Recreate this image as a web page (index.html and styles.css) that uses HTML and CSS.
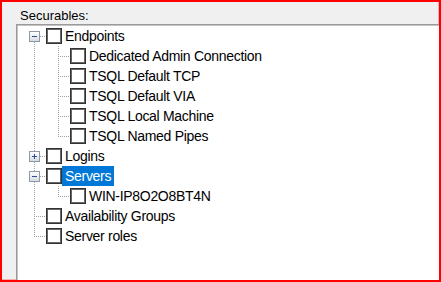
FILE: index.html
```html
<!DOCTYPE html>
<html lang="en">
<head>
    <meta charset="UTF-8">
    <title>Securables</title>
    <link rel="stylesheet" href="styles.css">
</head>
<body>
    <div class="frame">
        <div class="caption">Securables:</div>
        <div class="tree">
            <div class="row">
                <span class="cell first"><span class="expander minus"></span></span>
                <span class="check"></span>
                <span class="label">Endpoints</span>
            </div>
            <div class="row">
                <span class="cell pipe"></span>
                <span class="cell tee"></span>
                <span class="check"></span>
                <span class="label">Dedicated Admin Connection</span>
            </div>
            <div class="row">
                <span class="cell pipe"></span>
                <span class="cell tee"></span>
                <span class="check"></span>
                <span class="label">TSQL Default TCP</span>
            </div>
            <div class="row">
                <span class="cell pipe"></span>
                <span class="cell tee"></span>
                <span class="check"></span>
                <span class="label">TSQL Default VIA</span>
            </div>
            <div class="row">
                <span class="cell pipe"></span>
                <span class="cell tee"></span>
                <span class="check"></span>
                <span class="label">TSQL Local Machine</span>
            </div>
            <div class="row">
                <span class="cell pipe"></span>
                <span class="cell ell"></span>
                <span class="check"></span>
                <span class="label">TSQL Named Pipes</span>
            </div>
            <div class="row">
                <span class="cell tee"><span class="expander plus"></span></span>
                <span class="check"></span>
                <span class="label">Logins</span>
            </div>
            <div class="row">
                <span class="cell tee"><span class="expander minus"></span></span>
                <span class="check"></span>
                <span class="label selected">Servers</span>
            </div>
            <div class="row">
                <span class="cell pipe"></span>
                <span class="cell ell"></span>
                <span class="check"></span>
                <span class="label">WIN-IP8O2O8BT4N</span>
            </div>
            <div class="row">
                <span class="cell tee"></span>
                <span class="check"></span>
                <span class="label">Availability Groups</span>
            </div>
            <div class="row">
                <span class="cell ell"></span>
                <span class="check"></span>
                <span class="label">Server roles</span>
            </div>
        </div>
    </div>
</body>
</html>
```

FILE: styles.css
```css
* {
    margin: 0;
    padding: 0;
    box-sizing: border-box;
}

body {
    font-family: 'Liberation Sans', Arial, sans-serif;
    color: #000;
}

.frame {
    width: 441px;
    height: 282px;
    border: 2px solid #ff0000;
    box-shadow: inset -1px -1px 0 #f7b0b0;
    background: #f0f0f0;
    padding-left: 14px;
    overflow: hidden;
}

.caption {
    font-size: 13px;
    line-height: 15px;
    padding: 6px 0 1px 4px;
}

.tree {
    width: 460px;
    height: 300px;
    background: #fff;
    border: 1px solid #9a9a9a;
    box-shadow: inset 1px 1px 0 #c4c4c4;
    padding: 1px 0 0 5px;
}

.row {
    display: flex;
    align-items: center;
    height: 20px;
    font-size: 14px;
    letter-spacing: -0.3px;
}

/* tree lines */
.cell {
    --dotv: repeating-linear-gradient(to bottom, #a0a0a0 0 1px, transparent 1px 2px);
    --doth: repeating-linear-gradient(to right, #a0a0a0 0 1px, transparent 1px 2px);
    width: 24px;
    height: 20px;
    display: flex;
    align-items: center;
    padding-left: 7px;
    flex-shrink: 0;
}

.pipe {
    background: var(--dotv) 12px 0 / 1px 100% no-repeat;
}

.tee {
    background: var(--doth) 12px 10px / 12px 1px no-repeat,
                var(--dotv) 12px 0 / 1px 100% no-repeat;
}

.ell {
    background: var(--doth) 12px 10px / 12px 1px no-repeat,
                var(--dotv) 12px 0 / 1px 11px no-repeat;
}

.first {
    background: var(--doth) 12px 10px / 12px 1px no-repeat,
                var(--dotv) 12px 10px / 1px 10px no-repeat;
}

.expander {
    width: 11px;
    height: 11px;
    border: 1px solid #8e9aa8;
    background: linear-gradient(#2f4f8f, #2f4f8f) center / 5px 1px no-repeat,
                linear-gradient(#ffffff, #d6dbe3);
}

.expander.plus {
    background: linear-gradient(#2f4f8f, #2f4f8f) center / 5px 1px no-repeat,
                linear-gradient(#2f4f8f, #2f4f8f) center / 1px 5px no-repeat,
                linear-gradient(#ffffff, #d6dbe3);
}

.check {
    width: 16px;
    height: 16px;
    flex-shrink: 0;
    border: 1px solid #333;
    box-shadow: inset 0 0 0 1px #666;
    background: #fff;
}

.label {
    line-height: 20px;
    padding: 0 3px;
    white-space: nowrap;
}

.label.selected {
    background: #0078d7;
    color: #fff;
}
```
